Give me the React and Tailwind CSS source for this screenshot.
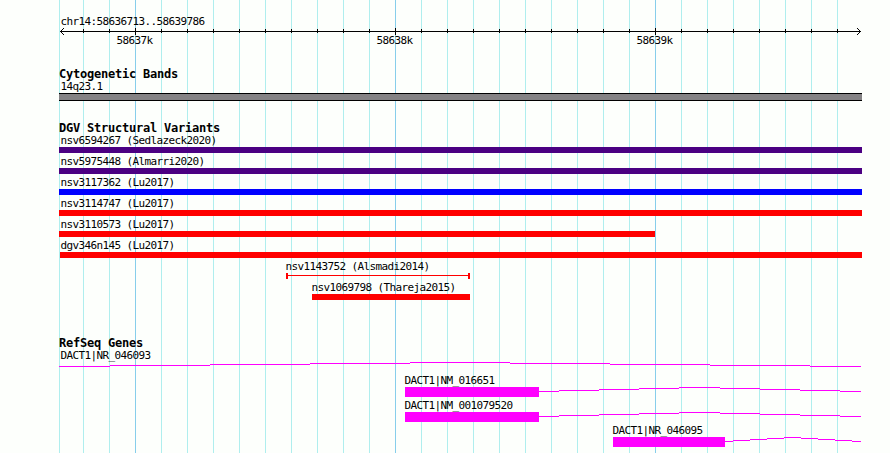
const LEFT = 59;
const WIDTH = 803;

const minorTicks = Array.from({ length: 30 }, (_, i) => 83 + i * 26);
const majorTicks = [135, 395, 655];

const variants = [
  { name: "nsv6594267 (Sedlazeck2020)", start: 59, end: 862, color: "bg-[#4b0082]" },
  { name: "nsv5975448 (Almarri2020)", start: 59, end: 862, color: "bg-[#4b0082]" },
  { name: "nsv3117362 (Lu2017)", start: 59, end: 862, color: "bg-[#0000ff]" },
  { name: "nsv3114747 (Lu2017)", start: 59, end: 862, color: "bg-[#ff0000]" },
  { name: "nsv3110573 (Lu2017)", start: 59, end: 655, color: "bg-[#ff0000]" },
  { name: "dgv346n145 (Lu2017)", start: 60, end: 862, color: "bg-[#ff0000]" },
  { name: "nsv1143752 (Alsmadi2014)", start: 286, end: 470, range: true },
  { name: "nsv1069798 (Thareja2015)", start: 312, end: 470, color: "bg-[#ff0000]" },
];

// intron: x positions where the line moves by one pixel, up to the peak and down again
const genes = [
  { name: "DACT1|NM_016651", start: 405, end: 539, intron: [539, 559, 599, 639, 679, 720, 760, 800, 840, 861] },
  { name: "DACT1|NM_001079520", start: 405, end: 539, intron: [539, 559, 599, 639, 679, 720, 760, 800, 840, 861] },
  { name: "DACT1|NR_046095", start: 613, end: 725, intron: [725, 733, 750, 767, 784, 801, 818, 835, 852, 861] },
];

function Title({ children }) {
  return (
    <h2 className="h-[13px] text-[12px] leading-[11px] font-bold tracking-[-0.224px] whitespace-pre">
      {children}
    </h2>
  );
}

function Label({ x = 60.5, leading = "leading-[9px]", children }) {
  return (
    <div
      className={`h-[11px] text-[11px] tracking-[-0.622px] whitespace-pre ${leading}`}
      style={{ marginLeft: x - LEFT }}
    >
      {children}
    </div>
  );
}

function Intron({ steps }) {
  const x0 = steps[0];
  const width = steps[steps.length - 1] - x0;
  return (
    <svg width={width} height="5" className="block shrink-0" fill="#ff00ff" shapeRendering="crispEdges">
      {steps.slice(0, -1).map((x, i) => (
        <rect key={x} x={x - x0} y={Math.abs(4 - i)} width={steps[i + 1] - x} height="1" />
      ))}
    </svg>
  );
}

function Ruler() {
  return (
    <svg width={WIDTH} height="7" viewBox="59 28 803 7" className="mt-px block" shapeRendering="crispEdges">
      <rect x="60" y="31" width="801" height="1" />
      {minorTicks.map((x) => (
        <rect key={x} x={x} y="29" width="1" height="4" />
      ))}
      {majorTicks.map((x) => (
        <rect key={x} x={x} y="28" width="1" height="7" />
      ))}
      {[1, 2, 3].map((d) => (
        <g key={d}>
          <rect x={60 + d} y={31 - d} width="1" height="1" />
          <rect x={60 + d} y={31 + d} width="1" height="1" />
          <rect x={860 - d} y={31 - d} width="1" height="1" />
          <rect x={860 - d} y={31 + d} width="1" height="1" />
        </g>
      ))}
    </svg>
  );
}

function GridLines() {
  return (
    <svg width="890" height="453" className="absolute inset-0" shapeRendering="crispEdges">
      {[59, ...minorTicks].map((x) => (
        <rect key={x} x={x} y="0" width="1" height="453" fill={majorTicks.includes(x) ? "#87ceeb" : "#afeeee"} />
      ))}
    </svg>
  );
}

function Variant({ name, start, end, color, range }) {
  return (
    <div>
      <Label x={Math.max(start - 0.5, 60.5)}>{name}</Label>
      <div className="flex h-[6px]" style={{ marginLeft: start - LEFT, width: end - start }}>
        {range ? (
          <>
            <div className="w-[2px] bg-[#ff0000]" />
            <div className="mt-[2px] h-px grow bg-[#ff0000]" />
            <div className="w-[2px] bg-[#ff0000]" />
          </>
        ) : (
          <div className={`grow ${color}`} />
        )}
      </div>
    </div>
  );
}

function Gene({ name, start, end, intron }) {
  return (
    <div>
      <Label x={start - 0.5}>{name}</Label>
      <div className="flex h-[10px]" style={{ marginLeft: start - LEFT }}>
        <div className="bg-[#ff00ff]" style={{ width: end - start }} />
        <Intron steps={intron} />
      </div>
    </div>
  );
}

export default function App() {
  return (
    <div className="relative h-[453px] w-[890px] overflow-hidden bg-[#fdfffc] font-['DejaVu_Sans_Mono',monospace] text-black">
      <GridLines />
      <main className="relative flex w-[862px] flex-col pt-4 pl-[59px]">
        <header>
          <Label leading="leading-[11px]">chr14:58636713..58639786</Label>
          <Ruler />
          <div className="flex pl-[57px]">
            {["58637k", "58638k", "58639k"].map((t) => (
              <div key={t} className="w-[260px] shrink-0">
                <Label x={LEFT + 0.5} leading="leading-[11px]">
                  {t}
                </Label>
              </div>
            ))}
          </div>
        </header>

        <section className="mt-[23px]">
          <Title>Cytogenetic Bands</Title>
          <Label>14q23.1</Label>
          <div className="h-2 border-y border-black bg-[#848284]" />
        </section>

        <section className="mt-[22px]">
          <Title>DGV Structural Variants</Title>
          <div className="flex flex-col gap-1">
            {variants.map((v) => (
              <Variant key={v.name} {...v} />
            ))}
          </div>
        </section>

        <section className="mt-[38px]">
          <Title>RefSeq Genes</Title>
          <Label>DACT1|NR_046093</Label>
          <Intron steps={[59, 110, 210, 310, 410, 510, 610, 710, 810, 861]} />
          <div className="mt-[9px] flex flex-col gap-1">
            {genes.map((g) => (
              <Gene key={g.name} {...g} />
            ))}
          </div>
        </section>
      </main>
    </div>
  );
}
